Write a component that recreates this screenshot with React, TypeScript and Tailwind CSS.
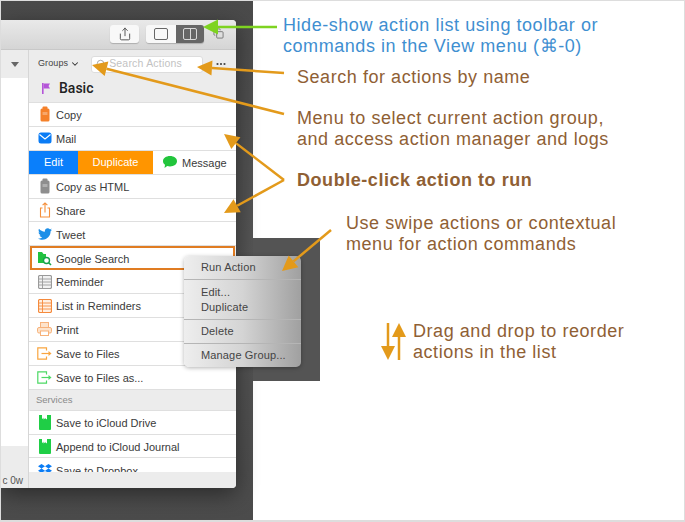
import { ReactNode } from "react";
import { ChevronDown, Copy, Ellipsis, Search, Share } from "lucide-react";
import { FaDropbox, FaTwitter } from "react-icons/fa";

const ORANGE = "#e39a1b";

function Clip({ color }: { color: string }) {
    return (
        <svg width="14" height="16" viewBox="0 0 14 16">
            <rect x="4.5" y="0.5" width="5" height="3" rx="1" fill={color} />
            <rect x="2.5" y="2.5" width="9" height="13" rx="1.5" fill={color} />
            <rect x="4.5" y="6" width="5" height="3" fill="#ffffff" opacity="0.3" />
        </svg>
    );
}

function Mail() {
    return (
        <svg width="14" height="12" viewBox="0 0 14 12">
            <rect x="0.5" y="0.5" width="13" height="11" rx="2.5" fill="#0a7cf5" />
            <path d="M1.5 2.5 L7 7 L12.5 2.5" fill="none" stroke="#ffffff" strokeWidth="1.1" />
        </svg>
    );
}

function ShareIcon() {
    return (
        <svg width="14" height="16" viewBox="0 0 14 16" fill="none" stroke="#f58f3a" strokeWidth="1.1">
            <path d="M4.5 6 H2.5 V15 H11.5 V6 H9.5" />
            <path d="M7 10.5 V1 M4.6 3.2 L7 1 L9.4 3.2" />
        </svg>
    );
}

function Finder() {
    return (
        <svg width="15" height="15" viewBox="0 0 15 15">
            <path d="M1 1 H5 L6.5 3 H9 V12 H1 Z" fill="#21c23f" />
            <circle cx="9.5" cy="9.5" r="3" fill="#ffffff" stroke="#16a34a" strokeWidth="1.4" />
            <path d="M11.7 11.7 L14 14" stroke="#16a34a" strokeWidth="1.6" />
        </svg>
    );
}

function ListBox({ color, fill }: { color: string; fill: string }) {
    return (
        <svg width="14" height="14" viewBox="0 0 14 14" fill="none" stroke={color} strokeWidth="0.9">
            <rect x="0.5" y="0.5" width="13" height="13" rx="1.5" fill={fill} strokeWidth="1.2" />
            <path d="M1 4 H13 M1 7 H13 M1 10 H13 M4.5 1 V13" />
        </svg>
    );
}

function Printer() {
    return (
        <svg width="15" height="14" viewBox="0 0 15 14" fill="#fde3cb" stroke="#f7b27a" strokeWidth="1">
            <rect x="3.5" y="0.5" width="8" height="5" />
            <rect x="0.5" y="5.5" width="14" height="5.5" rx="1.5" />
            <rect x="3.5" y="9" width="8" height="4.5" fill="#ffffff" />
        </svg>
    );
}

function SaveFile({ color }: { color: string }) {
    return (
        <svg width="15" height="13" viewBox="0 0 15 13" fill="none" stroke={color} strokeWidth="1.2">
            <path d="M9.5 3.5 V0.8 H0.8 V12.2 H9.5 V9.5" />
            <path d="M4.5 6.5 H12" />
            <path d="M11.5 4 L14.5 6.5 L11.5 9 Z" fill={color} stroke="none" />
        </svg>
    );
}

function Book() {
    return (
        <svg width="12" height="16" viewBox="0 0 12 16">
            <path d="M0 1 H3 V5 L5 3.5 V1 H12 V15 Q12 16 11 16 H1 Q0 16 0 15 Z" fill="#1fce46" />
            <path d="M4.5 0 H8 V5.5 L6.2 4.2 L4.5 5.5 Z" fill="#ffffff" />
        </svg>
    );
}

function Row({ icon, label }: { icon: ReactNode; label: string }) {
    return (
        <div className="flex h-[23.9px] shrink-0 items-center border-b-[1.5px] border-[#dfdfdf] bg-white">
            <div className="flex w-[27px] shrink-0 justify-center pl-[4px]">{icon}</div>
            <span className="pt-[2px] text-[11px] text-[#3a3a3a]">{label}</span>
        </div>
    );
}

function Arrow({ x1, y1, x2, y2, color = ORANGE, len = 15, half = 7.5 }: { x1: number; y1: number; x2: number; y2: number; color?: string; len?: number; half?: number }) {
    const d = Math.hypot(x2 - x1, y2 - y1);
    const ux = (x2 - x1) / d;
    const uy = (y2 - y1) / d;
    const bx = x2 - ux * len;
    const by = y2 - uy * len;
    return (
        <g>
            <line x1={x1} y1={y1} x2={bx} y2={by} stroke={color} strokeWidth="2.5" />
            <polygon points={`${x2},${y2} ${bx - uy * half},${by + ux * half} ${bx + uy * half},${by - ux * half}`} fill={color} />
        </g>
    );
}

function ContextMenu() {
    return (
        <div className="absolute left-[183px] top-[255px] flex h-[111px] w-[117px] flex-col rounded-[5px] bg-gradient-to-r from-[#eeeeee] via-[#d4d4d4] to-[#a0a0a0] pl-[17px] text-[11px] tracking-[0.15px] text-[#444444] shadow-[0_1px_4px_rgba(0,0,0,0.3)]">
            <div className="flex h-[23px] items-center">Run Action</div>
            <div className="-ml-[17px] h-px bg-[#b5b5b5]" />
            <div className="flex h-[39px] flex-col justify-center leading-[15px]">
                <span>Edit...</span>
                <span>Duplicate</span>
            </div>
            <div className="-ml-[17px] h-px bg-[#b5b5b5]" />
            <div className="flex h-[23px] items-center">Delete</div>
            <div className="-ml-[17px] h-px bg-[#b5b5b5]" />
            <div className="flex h-[23px] items-center">Manage Group...</div>
        </div>
    );
}

function ActionList() {
    return (
        <div className="flex min-h-0 flex-1 flex-col overflow-hidden">
            <Row icon={<Clip color="#f5812a" />} label="Copy" />
            <Row icon={<Mail />} label="Mail" />
            <div className="flex h-[23.9px] shrink-0 border-b-[1.5px] border-[#dfdfdf] bg-white text-[11px]">
                <div className="flex w-[49px] items-center justify-center bg-[#0a7ffb] text-white">Edit</div>
                <div className="flex w-[75px] items-center justify-center bg-[#ff9500] text-white">Duplicate</div>
                <div className="flex flex-1 items-center gap-[5px] pl-[10px] text-[#3a3a3a]">
                    <svg width="14" height="12" viewBox="0 0 14 12">
                        <path d="M7 0 C11 0 14 2.2 14 5.2 C14 8.2 11 10.4 7 10.4 C6 10.4 5 10.3 4.2 10 L1.5 12 L2 8.8 C0.7 7.8 0 6.6 0 5.2 C0 2.2 3 0 7 0 Z" fill="#22c53c" />
                    </svg>
                    <span className="pt-[2px]">Message</span>
                </div>
            </div>
            <Row icon={<Clip color="#8e8e8e" />} label="Copy as HTML" />
            <Row icon={<ShareIcon />} label="Share" />
            <Row icon={<FaTwitter size={14} color="#1d8fe8" />} label="Tweet" />
            <div className="mx-px flex h-[23.9px] shrink-0 items-center border-2 border-[#e07c22] bg-white">
                <div className="flex w-[24px] shrink-0 justify-center pl-[1px]"><Finder /></div>
                <span className="pt-px text-[11px] text-[#3a3a3a]">Google Search</span>
            </div>
            <Row icon={<ListBox color="#9a9a9a" fill="#f2f2f2" />} label="Reminder" />
            <Row icon={<ListBox color="#f58a3c" fill="#fff0e2" />} label="List in Reminders" />
            <Row icon={<Printer />} label="Print" />
            <Row icon={<SaveFile color="#f9a53f" />} label="Save to Files" />
            <Row icon={<SaveFile color="#4cd964" />} label="Save to Files as..." />
            <div className="ml-px flex h-[21px] shrink-0 items-center border-b-[1.5px] border-[#dfdfdf] bg-[#ececec] pt-px pl-[6px] text-[9.5px] text-[#8a8a8a]">Services</div>
            <Row icon={<Book />} label="Save to iCloud Drive" />
            <Row icon={<Book />} label="Append to iCloud Journal" />
            <Row icon={<FaDropbox size={14} color="#0a7cf5" />} label="Save to Dropbox" />
        </div>
    );
}

function Window() {
    return (
        <div className="flex h-[468px] w-[235px] flex-col overflow-hidden rounded-r-[4px] bg-[#ececec] shadow-[0_6px_22px_rgba(0,0,0,0.45)]">
            <div className="flex h-[30px] shrink-0 items-center border-b border-[#c8c8c8] bg-gradient-to-b from-[#e9e9e9] to-[#d5d5d5] pb-[2px] pl-[109px]">
                <div className="flex h-[18px] w-[29px] items-center justify-center rounded-[3px] bg-[#f8f8f8] shadow-[0_1px_1px_rgba(0,0,0,0.2)]">
                    <Share size={14} strokeWidth={1.5} color="#444444" />
                </div>
                <div className="ml-[7px] flex h-[18px] w-[58px] overflow-hidden rounded-[3px] shadow-[0_1px_1px_rgba(0,0,0,0.2)]">
                    <div className="flex w-[30px] items-center justify-center bg-[#f8f8f8]">
                        <div className="h-[12px] w-[14px] rounded-[2px] border border-[#666666]" />
                    </div>
                    <div className="flex flex-1 items-center justify-center bg-[#666666]">
                        <div className="flex h-[12px] w-[14px] justify-center rounded-[2px] border border-[#d8d8d8]">
                            <div className="h-full w-px bg-[#d8d8d8]" />
                        </div>
                    </div>
                </div>
                <Copy size={11} strokeWidth={1.5} color="#555555" className="ml-[9px]" />
            </div>
            <div className="flex min-h-0 flex-1">
                <div className="flex w-[28px] shrink-0 flex-col border-r border-[#d6d6d6]">
                    <div className="flex h-[28px] items-center justify-end bg-[#ececec] pr-[9px]">
                        <div className="h-0 w-0 border-x-[4.5px] border-t-[5px] border-x-transparent border-t-[#666666]" />
                    </div>
                    <div className="flex-1 bg-white" />
                    <div className="flex h-[42px] items-center justify-end overflow-hidden bg-[#ececec] pt-[27px] pr-[5px] text-[10px] whitespace-nowrap text-[#555555]">c 0w</div>
                </div>
                <div className="flex min-w-0 flex-1 flex-col">
                    <div className="flex h-[28px] shrink-0 items-center pl-[9px]">
                        <span className="text-[9px] tracking-[0.1px] text-[#444444]">Groups</span>
                        <ChevronDown size={10} strokeWidth={2.5} color="#333333" className="ml-[2px]" />
                        <div className="ml-[11px] flex h-[17px] w-[112px] items-center rounded-[3px] border border-[#dddddd] bg-white pl-[4px]">
                            <Search size={10} strokeWidth={1.5} color="#777777" />
                            <span className="ml-[3px] text-[10.5px] tracking-[0.2px] text-[#c2c2c2]">Search Actions</span>
                        </div>
                        <Ellipsis size={12} strokeWidth={2.4} color="#444444" className="ml-[12px]" />
                    </div>
                    <div className="flex h-[25px] shrink-0 items-center border-b-[1.5px] border-[#dfdfdf] pb-[4px] pl-[13px]">
                        <svg width="8" height="11" viewBox="0 0 8 11">
                            <rect x="0" y="0" width="1.6" height="11" fill="#b455d8" />
                            <path d="M1.6 0.5 H8 L6.5 3 L8 5.5 H1.6 Z" fill="#b455d8" />
                        </svg>
                        <span className="ml-[9px] font-['Roboto',sans-serif] text-[14px] font-medium text-[#222222]">Basic</span>
                    </div>
                    <ActionList />
                    <div className="h-[16px] shrink-0 bg-[#ececec]" />
                </div>
            </div>
        </div>
    );
}

function Note({ className, children }: { className: string; children: ReactNode }) {
    return <div className={`absolute text-[18px] leading-[21px] tracking-[0.55px] whitespace-nowrap ${className}`}>{children}</div>;
}

export default function App() {
    return (
        <div className="relative h-[522px] w-[685px] overflow-hidden border border-b-2 border-[#dddddd] bg-white font-['Liberation_Sans',sans-serif]">
            <div className="h-full w-[252px] bg-gradient-to-b from-[#4a4a4a] via-[#555555] to-[#4b4b4b] pt-[19px]">
                <Window />
            </div>
            <div className="absolute left-[252px] top-[237px] h-[143px] w-[67px] bg-[#545454]" />
            <ContextMenu />

            <svg className="absolute -left-px -top-px" width="685" height="522" viewBox="0 0 685 522">
                <Arrow x1={277} y1={27} x2={203} y2={27} color="#7ed321" />
                <Arrow x1={284} y1={73} x2={197} y2={67} />
                <Arrow x1={284} y1={114} x2={92} y2={65} />
                <Arrow x1={284} y1={180} x2={224} y2={134} />
                <Arrow x1={284} y1={180} x2={224} y2={213} />
                <Arrow x1={331} y1={230} x2={282} y2={271} />
                <Arrow x1={388} y1={323} x2={388} y2={360} len={14} half={7} />
                <Arrow x1={399} y1={360} x2={399} y2={323} len={14} half={7} />
            </svg>

            <Note className="left-[282px] top-[14px] text-[#3f8fd1]">
                Hide-show action list using toolbar or
                <br />
                commands in the View menu (⌘-0)
            </Note>
            <Note className="left-[296px] top-[66px] text-[#8f6034]">Search for actions by name</Note>
            <Note className="left-[296px] top-[107px] text-[#8f6034]">
                Menu to select current action group,
                <br />
                and access action manager and logs
            </Note>
            <Note className="left-[296px] top-[169px] font-bold text-[#8f6034]">Double-click action to run</Note>
            <Note className="left-[345px] top-[212px] text-[#8f6034]">
                Use swipe actions or contextual
                <br />
                menu for action commands
            </Note>
            <Note className="left-[412px] top-[320px] text-[#8f6034]">
                Drag and drop to reorder
                <br />
                actions in the list
            </Note>
        </div>
    );
}
